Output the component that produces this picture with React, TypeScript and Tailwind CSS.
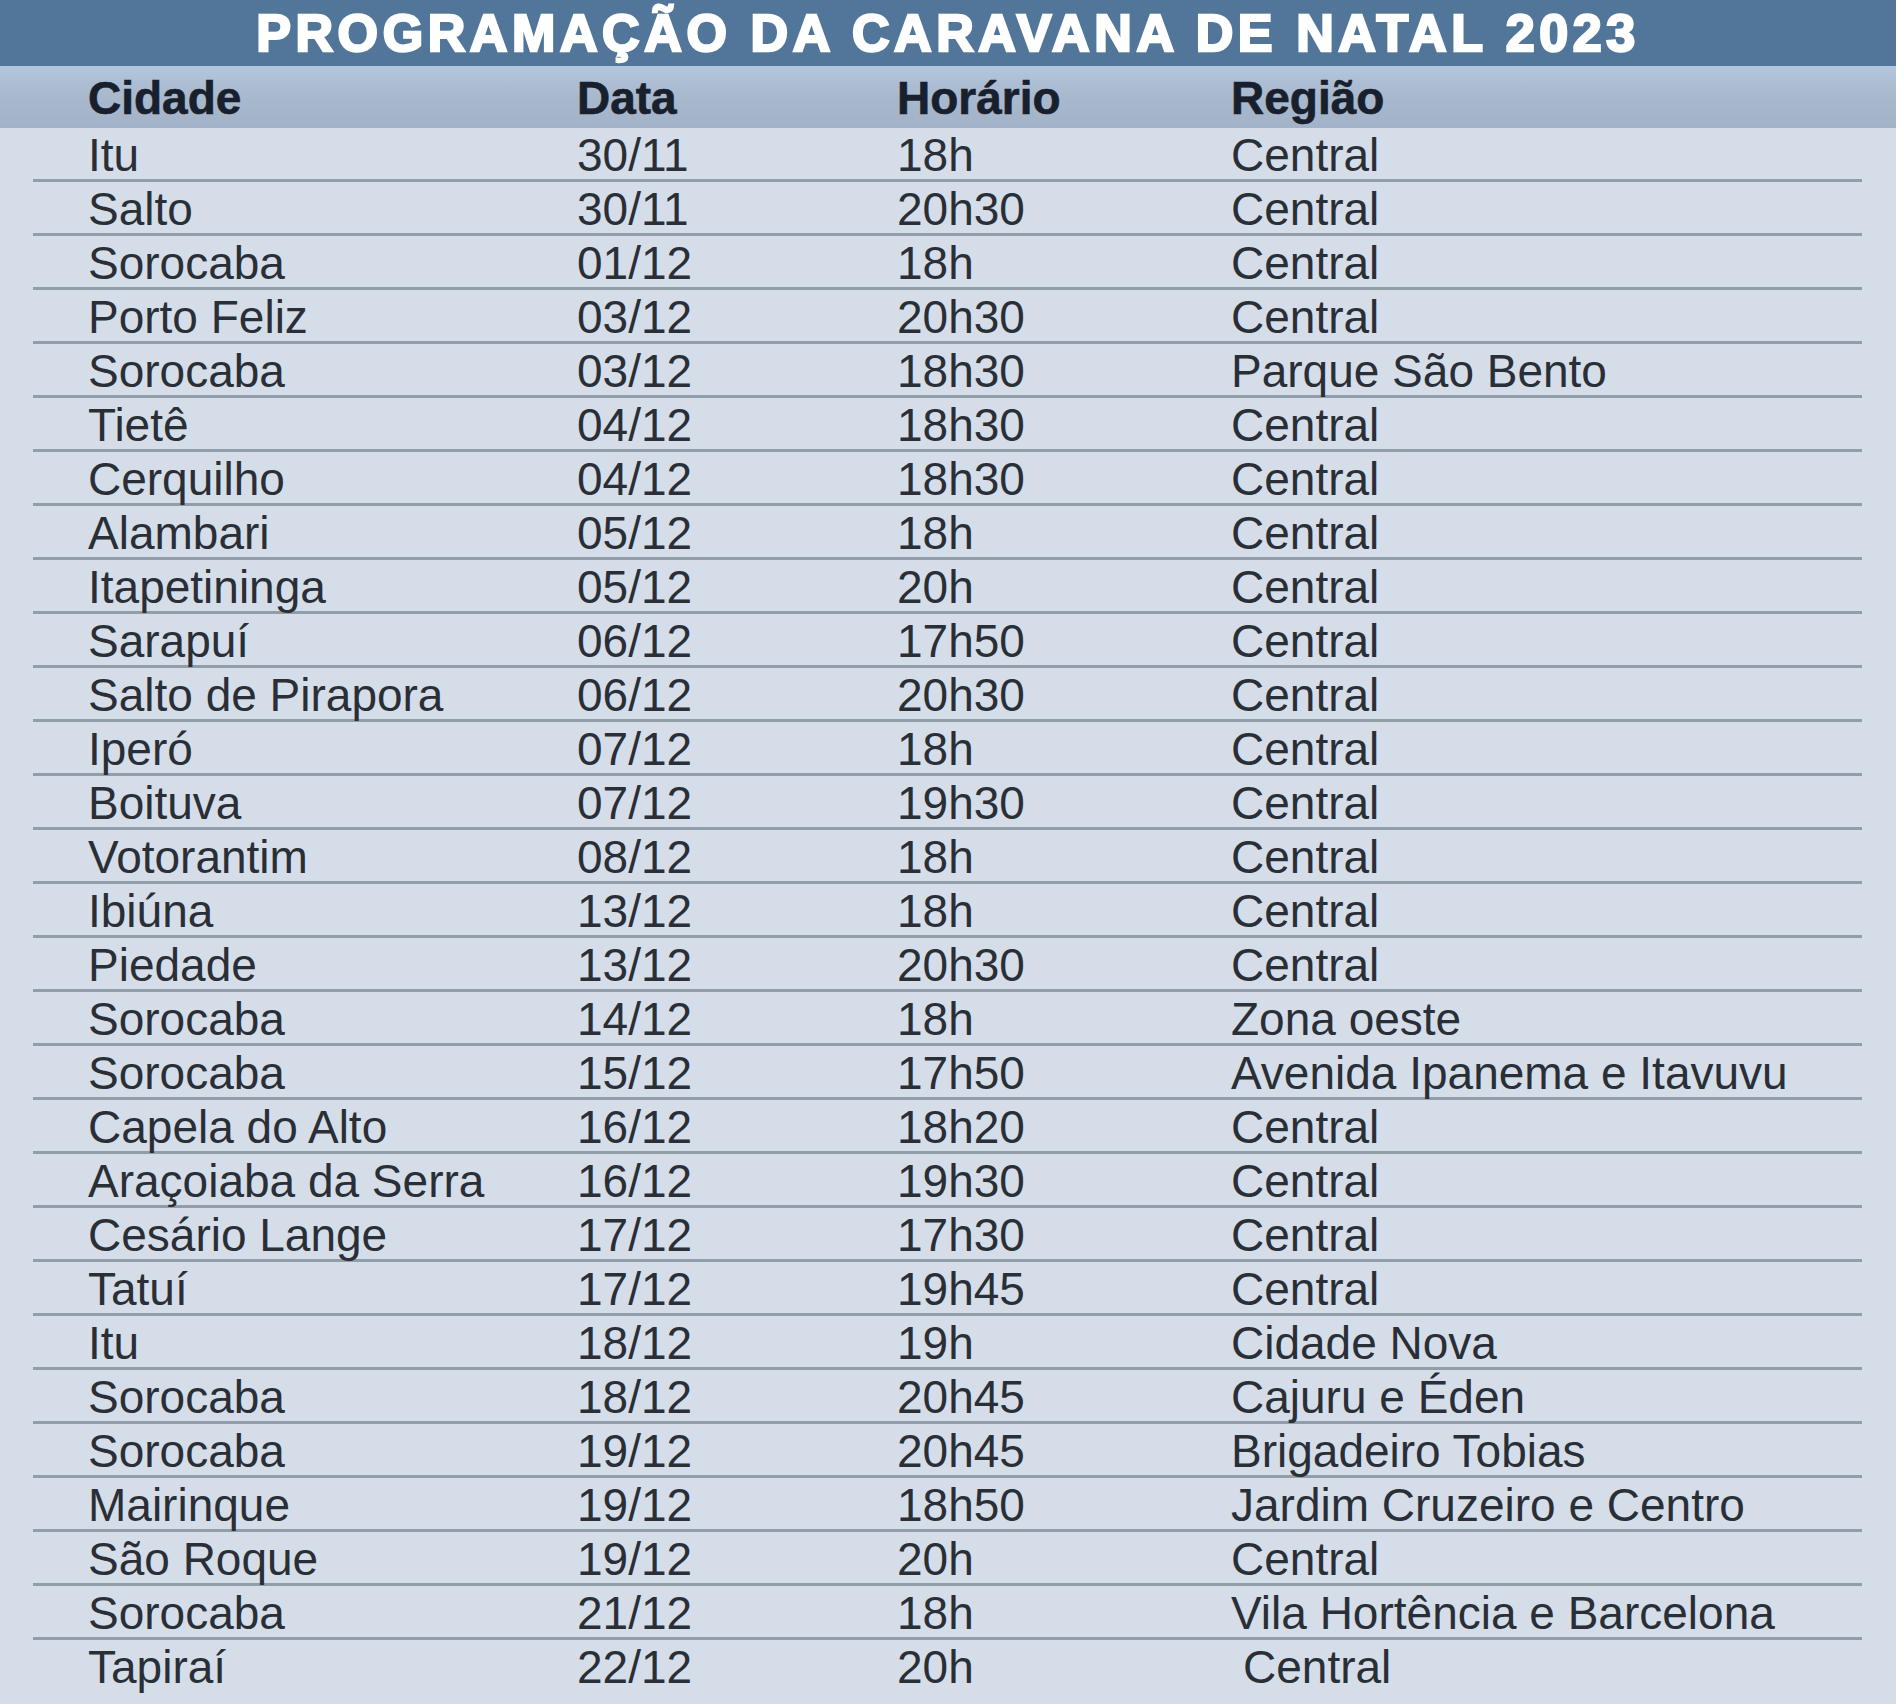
import React from "react"

type Row = { cidade: string; data: string; horario: string; regiao: string }

const rows: Row[] = [
  { cidade: "Itu", data: "30/11", horario: "18h", regiao: "Central" },
  { cidade: "Salto", data: "30/11", horario: "20h30", regiao: "Central" },
  { cidade: "Sorocaba", data: "01/12", horario: "18h", regiao: "Central" },
  { cidade: "Porto Feliz", data: "03/12", horario: "20h30", regiao: "Central" },
  { cidade: "Sorocaba", data: "03/12", horario: "18h30", regiao: "Parque São Bento" },
  { cidade: "Tietê", data: "04/12", horario: "18h30", regiao: "Central" },
  { cidade: "Cerquilho", data: "04/12", horario: "18h30", regiao: "Central" },
  { cidade: "Alambari", data: "05/12", horario: "18h", regiao: "Central" },
  { cidade: "Itapetininga", data: "05/12", horario: "20h", regiao: "Central" },
  { cidade: "Sarapuí", data: "06/12", horario: "17h50", regiao: "Central" },
  { cidade: "Salto de Pirapora", data: "06/12", horario: "20h30", regiao: "Central" },
  { cidade: "Iperó", data: "07/12", horario: "18h", regiao: "Central" },
  { cidade: "Boituva", data: "07/12", horario: "19h30", regiao: "Central" },
  { cidade: "Votorantim", data: "08/12", horario: "18h", regiao: "Central" },
  { cidade: "Ibiúna", data: "13/12", horario: "18h", regiao: "Central" },
  { cidade: "Piedade", data: "13/12", horario: "20h30", regiao: "Central" },
  { cidade: "Sorocaba", data: "14/12", horario: "18h", regiao: "Zona oeste" },
  { cidade: "Sorocaba", data: "15/12", horario: "17h50", regiao: "Avenida Ipanema e Itavuvu" },
  { cidade: "Capela do Alto", data: "16/12", horario: "18h20", regiao: "Central" },
  { cidade: "Araçoiaba da Serra", data: "16/12", horario: "19h30", regiao: "Central" },
  { cidade: "Cesário Lange", data: "17/12", horario: "17h30", regiao: "Central" },
  { cidade: "Tatuí", data: "17/12", horario: "19h45", regiao: "Central" },
  { cidade: "Itu", data: "18/12", horario: "19h", regiao: "Cidade Nova" },
  { cidade: "Sorocaba", data: "18/12", horario: "20h45", regiao: "Cajuru e Éden" },
  { cidade: "Sorocaba", data: "19/12", horario: "20h45", regiao: "Brigadeiro Tobias" },
  { cidade: "Mairinque", data: "19/12", horario: "18h50", regiao: "Jardim Cruzeiro e Centro" },
  { cidade: "São Roque", data: "19/12", horario: "20h", regiao: "Central" },
  { cidade: "Sorocaba", data: "21/12", horario: "18h", regiao: "Vila Hortência e Barcelona" },
  { cidade: "Tapiraí", data: "22/12", horario: "20h", regiao: "Central" },
]

const cols = "grid grid-cols-[489px_320px_334px_1fr]"

export default function App() {
  return (
    <div className="min-h-[1704px] bg-white font-[family-name:'Liberation_Sans',Arial,Helvetica,sans-serif]">
      <div className="w-[1896px] bg-[#d5dee8] pb-[10px]">
        {/* Title bar */}
        <div className="h-[66px] bg-[#51769a] text-center text-[52px] leading-[66px] font-bold uppercase tracking-[4.6px] text-white [-webkit-text-stroke:2.5px_white]">
          Programação da Caravana de Natal 2023
        </div>

        {/* Column header */}
        <div
          className={`${cols} h-[62px] bg-gradient-to-b from-[#b3c6dc] via-[#a8b8cd] to-[#a2b2c7] pl-[88px] pt-[2px] text-[46px] leading-[60px] font-bold text-[#18202e] [-webkit-text-stroke:0.6px_#18202e]`}
        >
          <div>Cidade</div>
          <div>Data</div>
          <div>Horário</div>
          <div>Região</div>
        </div>

        {/* Rows */}
        <div className="flex flex-col">
          {rows.map((r, i) => {
            const last = i === rows.length - 1
            return (
              <div
                key={i}
                className={`${cols} ml-[33px] w-[1829px] h-[54px] pl-[55px] text-[46px] leading-[54px] text-[#2a2f37] ${
                  last ? "" : "border-b-[3px] border-[#929daa]"
                }`}
              >
                <div className="whitespace-nowrap">{r.cidade}</div>
                <div>{r.data}</div>
                <div>{r.horario}</div>
                <div className={`whitespace-nowrap ${last ? "pl-[12px]" : ""}`}>{r.regiao}</div>
              </div>
            )
          })}
        </div>
      </div>
    </div>
  )
}
